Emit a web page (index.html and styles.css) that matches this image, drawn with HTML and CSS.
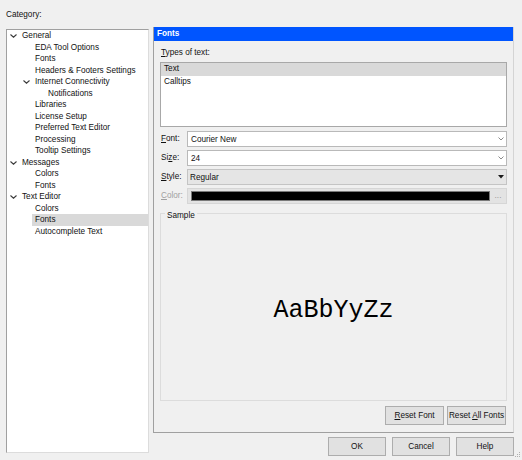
FILE: index.html
```html
<!DOCTYPE html>
<html>
<head>
<meta charset="utf-8">
<link rel="stylesheet" href="styles.css">
</head>
<body>
<div class="dialog">
  <div class="cat-label">Category:</div>
  <div class="main">
    <div class="tree">
      <div class="row l0"><span class="tog"><svg width="11" height="11" viewBox="0 0 11 11"><path d="M2.5 4.5 L5.5 7.2 L8.5 4.5" fill="none" stroke="#3a3a3a" stroke-width="1.1"/></svg></span><span class="lbl">General</span></div>
      <div class="row l1"><span class="tog"></span><span class="lbl">EDA Tool Options</span></div>
      <div class="row l1"><span class="tog"></span><span class="lbl">Fonts</span></div>
      <div class="row l1"><span class="tog"></span><span class="lbl">Headers &amp; Footers Settings</span></div>
      <div class="row l1"><span class="tog"><svg width="11" height="11" viewBox="0 0 11 11"><path d="M2.5 4.5 L5.5 7.2 L8.5 4.5" fill="none" stroke="#3a3a3a" stroke-width="1.1"/></svg></span><span class="lbl">Internet Connectivity</span></div>
      <div class="row l2"><span class="tog"></span><span class="lbl">Notifications</span></div>
      <div class="row l1"><span class="tog"></span><span class="lbl">Libraries</span></div>
      <div class="row l1"><span class="tog"></span><span class="lbl">License Setup</span></div>
      <div class="row l1"><span class="tog"></span><span class="lbl">Preferred Text Editor</span></div>
      <div class="row l1"><span class="tog"></span><span class="lbl">Processing</span></div>
      <div class="row l1"><span class="tog"></span><span class="lbl">Tooltip Settings</span></div>
      <div class="row l0"><span class="tog"><svg width="11" height="11" viewBox="0 0 11 11"><path d="M2.5 4.5 L5.5 7.2 L8.5 4.5" fill="none" stroke="#3a3a3a" stroke-width="1.1"/></svg></span><span class="lbl">Messages</span></div>
      <div class="row l1"><span class="tog"></span><span class="lbl">Colors</span></div>
      <div class="row l1"><span class="tog"></span><span class="lbl">Fonts</span></div>
      <div class="row l0"><span class="tog"><svg width="11" height="11" viewBox="0 0 11 11"><path d="M2.5 4.5 L5.5 7.2 L8.5 4.5" fill="none" stroke="#3a3a3a" stroke-width="1.1"/></svg></span><span class="lbl">Text Editor</span></div>
      <div class="row l1"><span class="tog"></span><span class="lbl">Colors</span></div>
      <div class="row l1"><span class="tog"></span><span class="lbl sel">Fonts</span></div>
      <div class="row l1"><span class="tog"></span><span class="lbl">Autocomplete Text</span></div>
    </div>
    <div class="right">
      <div class="panel">
        <div class="ph">Fonts</div>
        <div class="pbody">
          <div class="types-label"><u>T</u>ypes of text:</div>
          <div class="list">
            <div class="li sel">Text</div>
            <div class="li">Calltips</div>
          </div>
          <div class="form">
            <div class="flabel"><u>F</u>ont:</div>
            <div class="combo"><span>Courier New</span><svg width="6" height="4" viewBox="0 0 6 4"><path d="M0.5 0.5 L3 3 L5.5 0.5" fill="none" stroke="#8a8a8a" stroke-width="1"/></svg></div>
            <div class="flabel">Si<u>z</u>e:</div>
            <div class="combo"><span>24</span><svg width="6" height="4" viewBox="0 0 6 4"><path d="M0.5 0.5 L3 3 L5.5 0.5" fill="none" stroke="#8a8a8a" stroke-width="1"/></svg></div>
            <div class="flabel"><u>S</u>tyle:</div>
            <div class="combo style"><span>Regular</span><svg width="6" height="4" viewBox="0 0 6 4"><path d="M0 0 L6 0 L3 3.5 Z" fill="#1a1a1a"/></svg></div>
            <div class="flabel dis"><u>C</u>olor:</div>
            <div class="colorf"><div class="swatch"></div><span class="dots">...</span></div>
          </div>
          <div class="sample">
            <span class="legend">Sample</span>
            <div class="stext">AaBbYyZz</div>
          </div>
          <div class="pbtns">
            <button class="btn rb"><u>R</u>eset Font</button>
            <button class="btn rb">Reset <u>A</u>ll Fonts</button>
          </div>
        </div>
      </div>
      <div class="btns">
        <button class="btn db">OK</button>
        <button class="btn db">Cancel</button>
        <button class="btn db">Help</button>
      </div>
    </div>
  </div>
</div>
<svg class="grip" width="6" height="6" viewBox="0 0 6 6"><rect x="4" y="0" width="1" height="1" fill="#b0b0b0"/><rect x="2" y="2" width="1" height="1" fill="#b0b0b0"/><rect x="4" y="2" width="1" height="1" fill="#b0b0b0"/><rect x="0" y="4" width="1" height="1" fill="#b0b0b0"/><rect x="2" y="4" width="1" height="1" fill="#b0b0b0"/><rect x="4" y="4" width="1" height="1" fill="#b0b0b0"/></svg>
</body>
</html>
```

FILE: styles.css
```css
* { box-sizing: border-box; }
html, body { margin: 0; padding: 0; }
body {
  background: #f0f0f0;
  width: 522px;
  height: 460px;
  font-family: "Liberation Sans", Arial, sans-serif;
  font-size: 8.2px;
  color: #111;
  position: relative;
  overflow: hidden;
}
u { text-underline-offset: 1px; }
.dialog { padding: 9px 8px 0 6px; }
.cat-label { height: 18px; line-height: 11.5px; }
.main { display: flex; gap: 4px; }

.tree {
  width: 143px;
  height: 424px;
  margin-top: 2px;
  background: #fff;
  border: 1px solid #a0a0a0;
  border-right-color: #dcdcdc;
  border-bottom-color: #dcdcdc;
}
.row { height: 11.5px; line-height: 11.5px; display: flex; white-space: nowrap; }
.l0 { padding-left: 1px; }
.l1 { padding-left: 14px; }
.l2 { padding-left: 27px; }
.tog { width: 11px; flex: none; display: flex; align-items: center; }
.lbl { flex: 1; padding-left: 3px; }
.sel { background: #d9d9d9; }

.right { width: 361px; display: flex; flex-direction: column; }
.panel {
  height: 406px;
  border: 1px solid #a0a0a0;
  border-top: 0;
  border-right-color: #d4d4d4;
  display: flex;
  flex-direction: column;
}
.ph {
  height: 14px;
  line-height: 14px;
  background: #0055ff;
  color: #fff;
  font-weight: bold;
  padding-left: 3px;
}
.pbody { flex: 1; display: flex; flex-direction: column; padding: 6px 6px 7px 6px; }
.types-label { height: 15px; line-height: 11.5px; padding-left: 1px; }
.list {
  height: 65px;
  background: #fff;
  border: 1px solid #a8a8a8;
}
.li { height: 12.5px; line-height: 12.5px; padding-left: 3px; }

.form {
  margin-top: 4px;
  display: grid;
  grid-template-columns: 27px 1fr;
  grid-auto-rows: 16px;
  row-gap: 3px;
}
.flabel { line-height: 16px; padding-left: 1px; }
.flabel.dis { color: #a0a0a0; }
.combo {
  background: #fff;
  border: 1px solid #b9b9b9;
  display: flex;
  align-items: center;
  justify-content: space-between;
  padding: 0 2px 0 3px;
}
.combo.style { background: #e5e5e5; border-color: #c4c4c4; padding-left: 2px; }
.colorf {
  background: #e3e3e3;
  border: 1px solid #d6d6d6;
  display: flex;
  align-items: stretch;
  padding: 2px 0 2px 3px;
}
.swatch { flex: 1; background: #000; border: 1px solid #7a7a7a; }
.dots { width: 16px; text-align: center; color: #9a9a9a; line-height: 10px; }

.sample {
  flex: 1;
  position: relative;
  margin-top: 9px;
  border: 1px solid #dcdcdc;
  display: flex;
  align-items: center;
  justify-content: center;
}
.legend {
  position: absolute;
  left: 4px;
  top: -4px;
  padding: 0 2px;
  line-height: 11.5px;
  background: #f0f0f0;
}
.stext {
  font-family: "Liberation Mono", "Courier New", monospace;
  font-size: 25px;
  line-height: 28px;
  color: #000;
  margin-top: 8px;
}

.btn {
  font: inherit;
  color: #111;
  background: #e1e1e1;
  border: 1px solid #adadad;
  padding: 0;
  height: 19px;
}
.pbtns { display: flex; justify-content: flex-end; gap: 3px; margin-top: 5px; padding-right: 1px; }
.rb { width: 59px; }
.btns { display: flex; justify-content: flex-end; gap: 6px; margin-top: 4px; }
.db { width: 58px; }
.grip { position: absolute; right: 1px; bottom: 2px; }
```
